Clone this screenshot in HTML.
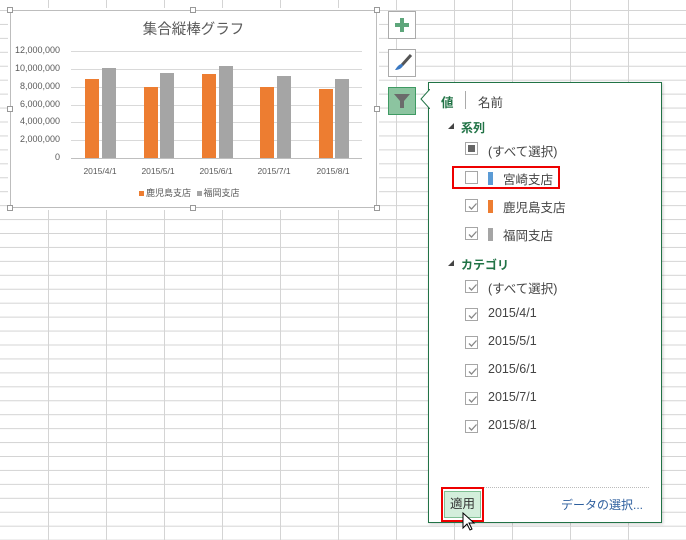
<!DOCTYPE html><html><head><meta charset="utf-8"><style>
*{margin:0;padding:0;box-sizing:border-box}
body{width:686px;height:540px;overflow:hidden;position:relative;background:#fff;font-family:"Liberation Sans","Noto Sans CJK JP",sans-serif;
background-image:linear-gradient(to right,#d4d4d4 1px,transparent 1px),linear-gradient(to bottom,#d4d4d4 1px,transparent 1px);
background-size:58px 13.95px;background-position:48px 10px}
.abs{position:absolute}
.chart{left:10px;top:10px;width:367px;height:198px;background:#fff;border:1px solid #bdbdbd;outline:2px solid #fff}
.h{position:absolute;width:6px;height:6px;border:1px solid #999;background:#fff}
.yl{position:absolute;right:626px;font-size:9px;color:#595959;width:60px;text-align:right}
.gl{position:absolute;left:71px;width:291px;height:1px;background:#d9d9d9}
.bar{position:absolute;width:14px}
.xl{position:absolute;font-size:8.5px;color:#595959;width:58px;text-align:center;top:166px}
.btn{position:absolute;left:388px;width:28px;height:28px;border:1px solid #ababab;background:#fff}
.panel{left:428px;top:82px;width:234px;height:441px;background:#fff;border:1px solid #217346;box-shadow:1px 1px 3px rgba(0,0,0,.2)}
.cb{position:absolute;left:36px;width:13px;height:13px;border:1px solid #a6a6a6;background:#fff}
.cb svg{position:absolute;left:1px;top:1px}
.it{position:absolute;left:59px;font-size:12.5px;color:#444}
.sec{position:absolute;left:32px;font-size:12px;color:#217346;font-weight:bold}
.tri{position:absolute;left:19px;width:0;height:0;border-left:6px solid transparent;border-bottom:6px solid #444}
</style></head><body>
<div class="abs chart"></div>
<div class="h" style="left:7px;top:7px"></div><div class="h" style="left:190px;top:7px"></div><div class="h" style="left:374px;top:7px"></div>
<div class="h" style="left:7px;top:106px"></div><div class="h" style="left:374px;top:106px"></div>
<div class="h" style="left:7px;top:205px"></div><div class="h" style="left:190px;top:205px"></div><div class="h" style="left:374px;top:205px"></div>
<div class="abs" style="left:10px;top:18px;width:367px;text-align:center;font-size:14.5px;color:#595959">集合縦棒グラフ</div>
<div class="yl" style="top:45px">12,000,000</div><div class="gl" style="top:51px"></div>
<div class="yl" style="top:63px">10,000,000</div><div class="gl" style="top:69px"></div>
<div class="yl" style="top:81px">8,000,000</div><div class="gl" style="top:87px"></div>
<div class="yl" style="top:99px">6,000,000</div><div class="gl" style="top:105px"></div>
<div class="yl" style="top:116px">4,000,000</div><div class="gl" style="top:122px"></div>
<div class="yl" style="top:134px">2,000,000</div><div class="gl" style="top:140px"></div>
<div class="yl" style="top:152px">0</div><div class="gl" style="top:158px;background:#bfbfbf"></div>
<div class="bar" style="left:85px;top:79px;height:79px;background:#ed7d31"></div><div class="bar" style="left:102px;top:68px;height:90px;background:#a5a5a5"></div>
<div class="bar" style="left:144px;top:87px;height:71px;background:#ed7d31"></div><div class="bar" style="left:160px;top:73px;height:85px;background:#a5a5a5"></div>
<div class="bar" style="left:202px;top:74px;height:84px;background:#ed7d31"></div><div class="bar" style="left:219px;top:66px;height:92px;background:#a5a5a5"></div>
<div class="bar" style="left:260px;top:87px;height:71px;background:#ed7d31"></div><div class="bar" style="left:277px;top:76px;height:82px;background:#a5a5a5"></div>
<div class="bar" style="left:319px;top:89px;height:69px;background:#ed7d31"></div><div class="bar" style="left:335px;top:79px;height:79px;background:#a5a5a5"></div>
<div class="xl" style="left:71px">2015/4/1</div><div class="xl" style="left:129px">2015/5/1</div><div class="xl" style="left:187px">2015/6/1</div><div class="xl" style="left:245px">2015/7/1</div><div class="xl" style="left:304px">2015/8/1</div>
<div class="abs" style="left:139px;top:186px;font-size:9px;color:#595959"><span style="display:inline-block;width:5px;height:5px;background:#ed7d31;margin-right:2px"></span>鹿児島支店 <span style="display:inline-block;width:5px;height:5px;background:#a5a5a5;margin:0 2px 0 3px"></span>福岡支店</div>

<div class="btn" style="top:11px"><svg width="26" height="26"><path d="M13 6v14M6 13h14" stroke="#5ea67b" stroke-width="4"/></svg></div>
<div class="btn" style="top:49px"><svg width="26" height="26"><path d="M22 5L13 15" stroke="#555" stroke-width="3"/><path d="M13 14c-3 0-5 3-7 6 3 0 6-1 8-4z" fill="#3a78c2"/></svg></div>
<div class="btn" style="top:87px;background:#8cc4a0;border-color:#3f9a63"><svg width="26" height="26"><path d="M5 6h16l-6 7v7h-4v-7z" fill="#6b6b6b"/></svg></div>

<div class="abs panel">
<svg style="position:absolute;left:-9px;top:6px" width="10" height="20"><path d="M10 0L1 10 10 20" fill="#fff" stroke="#217346"/></svg>
<div class="abs" style="left:12px;top:9px;font-size:12.5px;color:#217346;font-weight:bold">値</div>
<div class="abs" style="left:36px;top:8px;width:1px;height:18px;background:#aaa"></div>
<div class="abs" style="left:49px;top:9px;font-size:12.5px;color:#444">名前</div>
<div class="tri" style="top:40px"></div><div class="sec" style="top:36px">系列</div>
<div class="cb" style="top:59px"><div style="position:absolute;left:2px;top:2px;width:7px;height:7px;background:#666"></div></div><div class="it" style="top:58px">(すべて選択)</div>
<div class="cb" style="top:88px"></div><div class="abs" style="left:59px;top:89px;width:5px;height:13px;background:#5b9bd5"></div><div class="it" style="top:86px;left:74px">宮崎支店</div>
<div class="abs" style="left:23px;top:83px;width:108px;height:23px;border:2px solid #e00"></div>
<div class="cb" style="top:116px"><svg width="11" height="11"><path d="M2 5.5l2.5 2.5 5-5.5" stroke="#888" fill="none" stroke-width="1.3"/></svg></div><div class="abs" style="left:59px;top:117px;width:5px;height:13px;background:#ed7d31"></div><div class="it" style="top:114px;left:74px">鹿児島支店</div>
<div class="cb" style="top:144px"><svg width="11" height="11"><path d="M2 5.5l2.5 2.5 5-5.5" stroke="#888" fill="none" stroke-width="1.3"/></svg></div><div class="abs" style="left:59px;top:145px;width:5px;height:13px;background:#a5a5a5"></div><div class="it" style="top:142px;left:74px">福岡支店</div>
<div class="tri" style="top:177px"></div><div class="sec" style="top:173px">カテゴリ</div>
<div class="cb" style="top:197px"><svg width="11" height="11"><path d="M2 5.5l2.5 2.5 5-5.5" stroke="#888" fill="none" stroke-width="1.3"/></svg></div><div class="it" style="top:195px">(すべて選択)</div>
<div class="cb" style="top:225px"><svg width="11" height="11"><path d="M2 5.5l2.5 2.5 5-5.5" stroke="#888" fill="none" stroke-width="1.3"/></svg></div><div class="it" style="top:223px">2015/4/1</div>
<div class="cb" style="top:253px"><svg width="11" height="11"><path d="M2 5.5l2.5 2.5 5-5.5" stroke="#888" fill="none" stroke-width="1.3"/></svg></div><div class="it" style="top:251px">2015/5/1</div>
<div class="cb" style="top:281px"><svg width="11" height="11"><path d="M2 5.5l2.5 2.5 5-5.5" stroke="#888" fill="none" stroke-width="1.3"/></svg></div><div class="it" style="top:279px">2015/6/1</div>
<div class="cb" style="top:309px"><svg width="11" height="11"><path d="M2 5.5l2.5 2.5 5-5.5" stroke="#888" fill="none" stroke-width="1.3"/></svg></div><div class="it" style="top:307px">2015/7/1</div>
<div class="cb" style="top:337px"><svg width="11" height="11"><path d="M2 5.5l2.5 2.5 5-5.5" stroke="#888" fill="none" stroke-width="1.3"/></svg></div><div class="it" style="top:335px">2015/8/1</div>
<div class="abs" style="left:12px;top:404px;width:208px;border-top:1px dotted #bbb"></div>
<div class="abs" style="left:12px;top:404px;width:43px;height:35px;border:2px solid #e00"></div>
<div class="abs" style="left:15px;top:408px;width:37px;height:27px;background:#d3eedb;border:1px solid #7fbf93;font-size:12.5px;color:#333;text-align:center;line-height:25px">適用</div>
<div class="abs" style="right:18px;top:413px;font-size:12px;color:#2e5f9e">データの選択...</div>
<svg style="position:absolute;left:33px;top:429px" width="14" height="20"><path d="M1 1v15l4-4 3 6 2-1-3-6h5z" fill="#fff" stroke="#000"/></svg>
</div>
</body></html>
